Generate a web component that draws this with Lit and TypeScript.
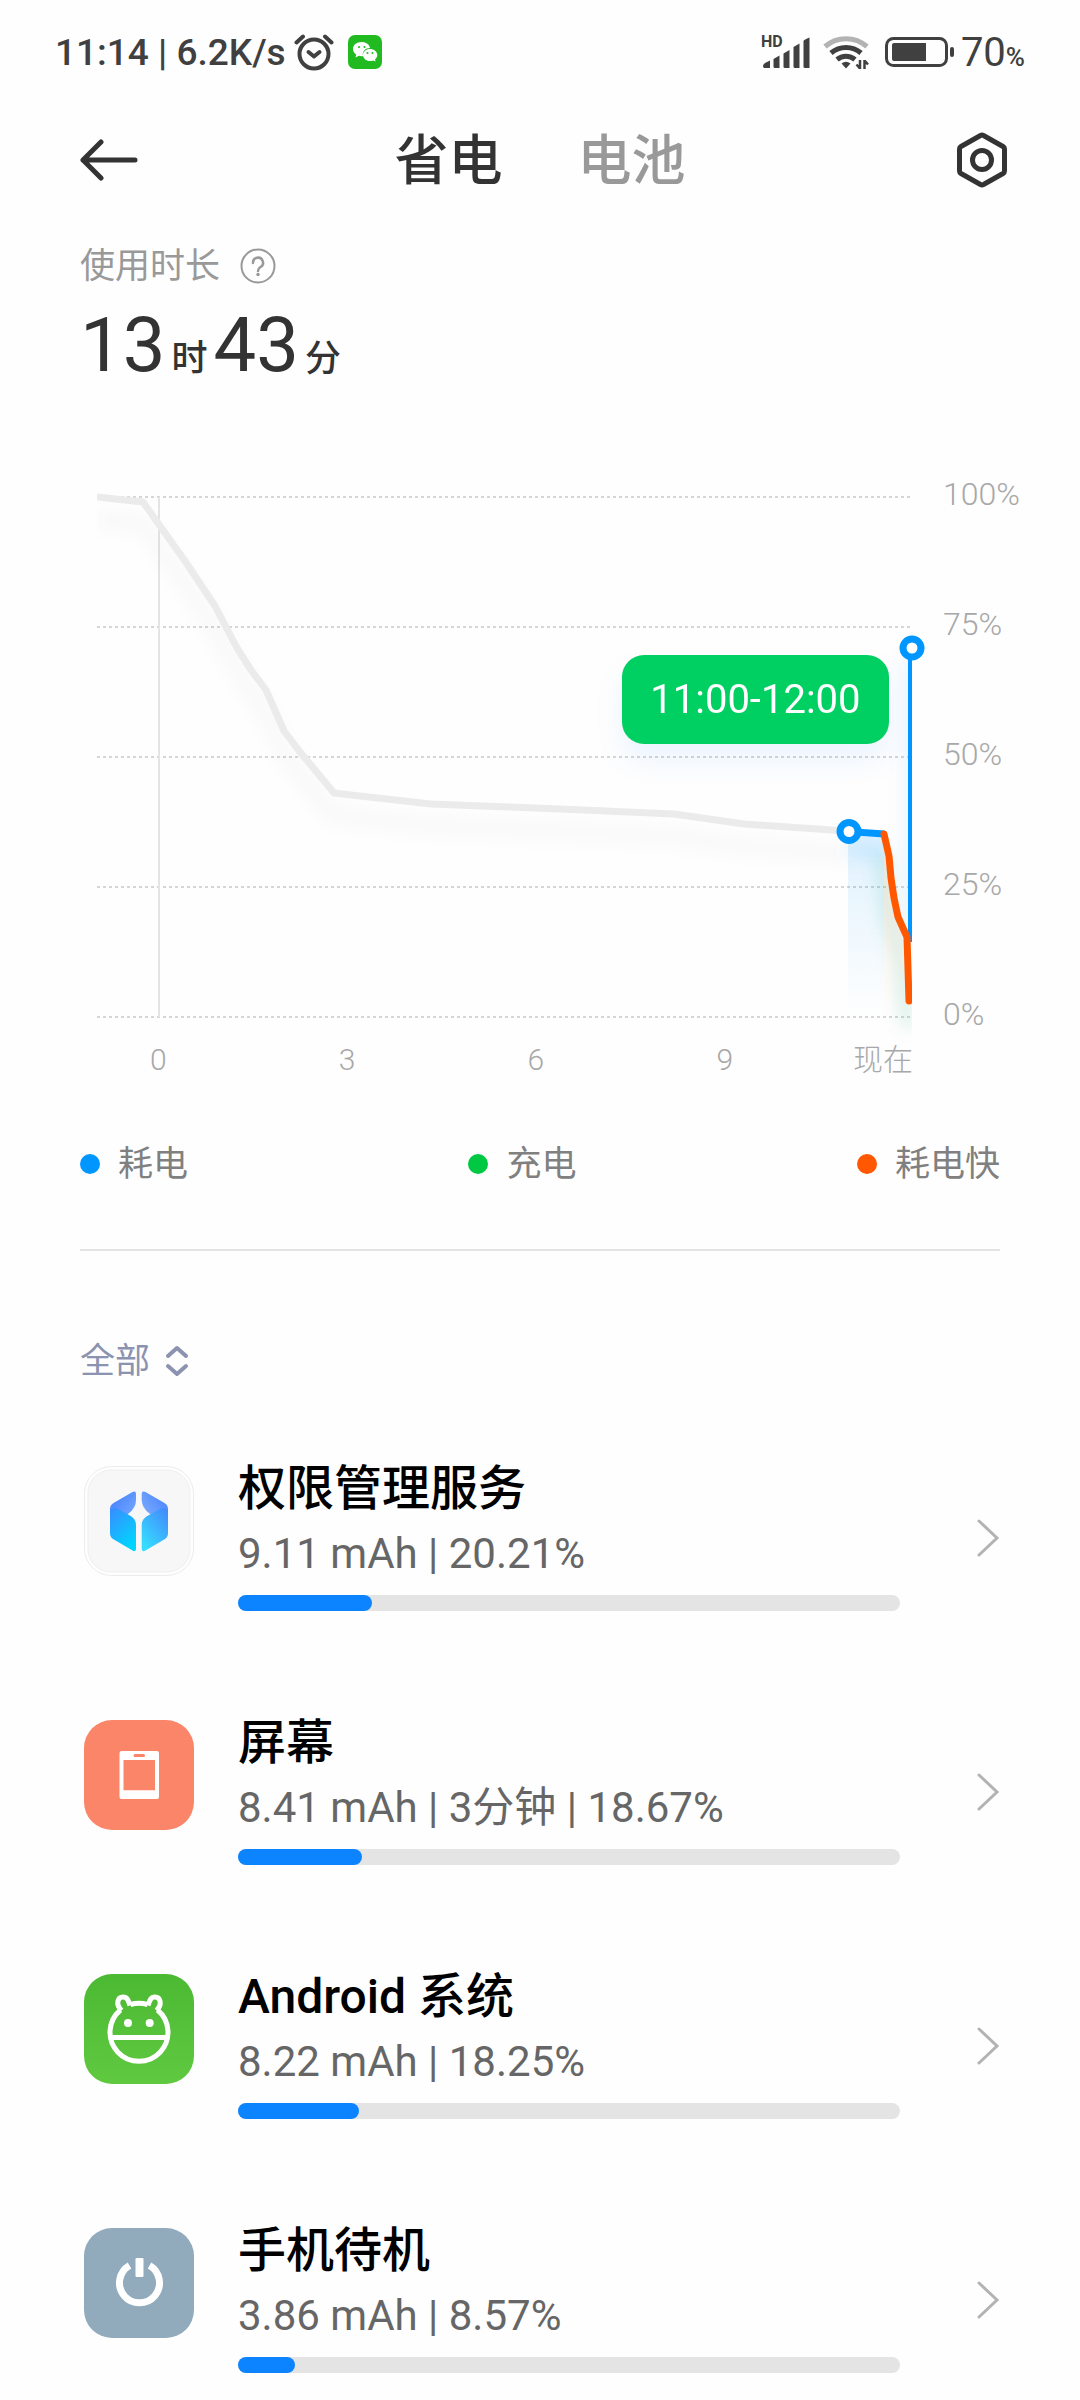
import { LitElement, html, css, svg } from "lit";
import { customElement, property } from "lit/decorators.js";

type IconName = "permission" | "screen" | "android" | "standby";

interface Consumer {
  icon: IconName;
  name: string;
  detail: string;
  percent: number;
}

const CONSUMERS: Consumer[] = [
  { icon: "permission", name: "权限管理服务", detail: "9.11 mAh | 20.21%", percent: 20.21 },
  { icon: "screen", name: "屏幕", detail: "8.41 mAh | 3分钟 | 18.67%", percent: 18.67 },
  { icon: "android", name: "Android 系统", detail: "8.22 mAh | 18.25%", percent: 18.25 },
  { icon: "standby", name: "手机待机", detail: "3.86 mAh | 8.57%", percent: 8.57 },
];

const ICONS = {
  permission: svg`
    <defs>
      <linearGradient id="top" x1="0" y1="0" x2="1" y2="1">
        <stop offset="0" stop-color="#3f7dfc" /><stop offset="1" stop-color="#7fb0ff" />
      </linearGradient>
      <linearGradient id="topR" x1="1" y1="0" x2="0" y2="1">
        <stop offset="0" stop-color="#4280fc" /><stop offset="1" stop-color="#8bb6ff" />
      </linearGradient>
      <linearGradient id="low" x1="0" y1="0" x2="0.6" y2="1">
        <stop offset="0" stop-color="#3a8bff" /><stop offset="1" stop-color="#00d5ff" />
      </linearGradient>
      <linearGradient id="lowR" x1="1" y1="0" x2="0.3" y2="1">
        <stop offset="0" stop-color="#4486fc" /><stop offset="1" stop-color="#35dcff" />
      </linearGradient>
    </defs>
    <rect x="0.5" y="0.5" width="109" height="109" rx="27" fill="#fefefe" stroke="#ececec" />
    <rect x="4" y="4" width="102" height="102" rx="23" fill="#f7f7f8" stroke="#efefef" />
    <path d="M26 60V43Q26 39 29.500 37L48.500 26Q52 24.500 52 28V34Q52 42 44.500 47.500L43 49L50 60Z" fill="url(#top)" />
    <path d="M84 60V43Q84 39 80.500 37L61.500 26Q57.700 24.500 57.700 28V34Q58 42 65.500 47.500L67 49L60 60Z" fill="url(#topR)" />
    <path d="M26 44Q31 40 36 44L44 48.500Q52 52 52 59V82.500Q52 86.500 48.500 84.500L29 73Q26 71 26 67Z" fill="url(#low)" />
    <path d="M84 44Q79 40 74 44L66 48.500Q57.700 52 57.700 59V82.500Q57.700 86.500 61.500 84.500L81 73Q84 71 84 67Z" fill="url(#lowR)" />`,
  screen: svg`
    <rect width="110" height="110" rx="28" fill="#fa8568" />
    <path fill-rule="evenodd" fill="#fff" d="M37.500 31H73Q75 31 75 33V77Q75 79 73 79H37.500Q35.500 79 35.500 77V33Q35.500 31 37.500 31ZM39.500 40V70.300H71V40ZM51 34Q49.500 34 49.500 35.500T51 37H59.500Q61 37 61 35.500T59.500 34Z" />`,
  android: svg`
    <defs>
      <linearGradient id="green" x1="0" y1="0" x2="0" y2="1">
        <stop offset="0" stop-color="#4cb933" /><stop offset="1" stop-color="#5fc940" />
      </linearGradient>
    </defs>
    <rect width="110" height="110" rx="28" fill="url(#green)" />
    <g fill="none" stroke="#fff" stroke-width="5" stroke-linejoin="round">
      <path d="M46.500 30.500A29 29 0 0 1 63.500 30.500" />
      <path d="M36.500 36A29 29 0 1 0 73.500 36" />
      <path d="M37.500 36.500C31 30 34 23 39 23C43.500 23 44.500 27 46 31.500" />
      <path d="M72.500 36.500C79 30 76 23 71 23C66.500 23 65.500 27 64 31.500" />
      <path d="M27 63.500H83" />
    </g>
    <circle cx="44" cy="49" r="4" fill="#fff" /><circle cx="65.700" cy="49" r="4" fill="#fff" />`,
  standby: svg`
    <rect width="110" height="110" rx="28" fill="#91abbd" />
    <path d="M45.500 37.500A20 20 0 1 0 65.500 37.500" fill="none" stroke="#fff" stroke-width="7" />
    <rect x="51.500" y="30" width="8" height="19" rx="1" fill="#fff" />`,
};

@customElement("usage-row")
export class UsageRow extends LitElement {
  @property({ attribute: false }) item!: Consumer;

  static styles = css`
    :host { display: block; }
    .row {
      display: flex;
      align-items: center;
      color: inherit;
      text-decoration: none;
    }
    .icon { flex: none; width: 110px; height: 110px; align-self: flex-start; margin: 9px 44px 0 4px; }
    .body { flex: 1; min-width: 0; padding-top: 2px; }
    .name { font-size: 48px; line-height: 60px; font-weight: 500; color: #000; }
    .detail { font-size: 42px; line-height: 52px; padding: 9px 0 15px; color: #666; }
    .track { height: 16px; border-radius: 8px; background: #e4e4e4; }
    .fill { height: 16px; border-radius: 8px; background: #0d84ff; }
    .chevron { flex: none; width: 24px; height: 40px; margin: 8px 0 0 76px; }
  `;

  render() {
    const { icon, name, detail, percent } = this.item;
    return html`
      <a class="row" href="#">
        <svg class="icon" viewBox="0 0 110 110" aria-hidden="true">${ICONS[icon]}</svg>
        <div class="body">
          <div class="name">${name}</div>
          <div class="detail">${detail}</div>
          <div class="track"><div class="fill" style="width:${percent}%"></div></div>
        </div>
        <svg class="chevron" viewBox="0 0 24 40" aria-hidden="true">
          <path d="M3 3L21 20L3 37" fill="none" stroke="#b3b3b3" stroke-width="3" stroke-linecap="round" />
        </svg>
      </a>
    `;
  }
}

@customElement("battery-chart")
export class BatteryChart extends LitElement {
  static styles = css`
    :host { display: block; }
    .plot { display: grid; grid-template-columns: minmax(0, 1fr) 137px; column-gap: 30px; margin-left: 97px; }
    .canvas { position: relative; }
    .lines { display: block; width: 100%; height: auto; overflow: visible; }
    .scale {
      display: flex;
      flex-direction: column;
      justify-content: space-between;
      margin: -23px 0 -17px;
      font-size: 32px;
      line-height: 40px;
      color: #a8a8a8;
      font-weight: 300;
    }
    .tip {
      position: absolute;
      right: 3%;
      top: 30.4%;
      padding: 0 28px;
      border-radius: 22px;
      background: #00d062;
      color: #fff;
      font-size: 40px;
      line-height: 89px;
      box-shadow: 0 16px 30px rgba(0, 130, 255, 0.08);
    }
    .hours {
      display: grid;
      grid-template-columns: repeat(4, 189fr) 94fr;
      margin: 23px 167px 0 64px;
      font-size: 30px;
      line-height: 40px;
      color: #a8a8a8;
      text-align: center;
      font-weight: 300;
      white-space: nowrap;
    }
    .now { display: flex; justify-content: flex-end; }
  `;

  render() {
    const rows = [0, 130, 260, 390, 520];
    const past = "0,0 46,5 88,64 118,109 140,151 154,173 169,193 187,234 203,255 237,296 334,307 463,312 577,317 647,327 750,334";
    const fast = "787,337 792,359 794,381 797,401 801,420 810,440 812,504";
    return html`
      <div class="plot">
        <div class="canvas">
          <svg class="lines" viewBox="0 0 816 520" role="img" aria-label="电量">
            <defs>
              <clipPath id="area"><rect x="0" y="-30" width="815" height="580" /></clipPath>
              <filter id="soft" x="-10%" y="-10%" width="120%" height="130%"><feGaussianBlur stdDeviation="8" /></filter>
              <linearGradient id="drain" x1="0" y1="0" x2="0" y2="1">
                <stop offset="0" stop-color="#0096ff" stop-opacity="0.12" />
                <stop offset="1" stop-color="#0096ff" stop-opacity="0" />
              </linearGradient>
              <linearGradient id="rapid" x1="0" y1="0" x2="0" y2="1">
                <stop offset="0" stop-color="#ff5a00" stop-opacity="0.1" />
                <stop offset="1" stop-color="#ff5a00" stop-opacity="0" />
              </linearGradient>
            </defs>
            ${rows.map((y) => svg`<path d="M0 ${y}H816" stroke="#d6d6d6" stroke-width="2" stroke-dasharray="3 3" />`)}
            <path d="M62 0V520" stroke="#e4e4e4" stroke-width="2" />
            <g clip-path="url(#area)" fill="none">
              <g filter="url(#soft)">
                <polyline points=${past} transform="translate(0 22)" stroke="#000" stroke-opacity="0.018" stroke-width="20" />
                <path d="M751 352L787 355" stroke="#0096ff" stroke-opacity="0.1" stroke-width="18" />
                <path d="M785 355L791 420L803 460L811 530" stroke="#00a070" stroke-opacity="0.16" stroke-width="12" />
                <path d="M813 160V440" stroke="#0096ff" stroke-opacity="0.12" stroke-width="10" />
              </g>
              <path d="M751 335L787 337V520H751Z" fill="url(#drain)" />
              <path d="M787 337L797 401L812 440V520H787Z" fill="url(#rapid)" />
              <polyline points=${past} stroke="#ebebeb" stroke-width="7" stroke-linejoin="round" />
              <path d="M751 334.500L787 337" stroke="#0096ff" stroke-width="7" />
              <path d="M813 150V445" stroke="#0096ff" stroke-width="4" />
              <polyline points=${fast} stroke="#ff5800" stroke-width="7" stroke-linejoin="round" stroke-linecap="round" />
            </g>
            <circle cx="752" cy="334.500" r="9" fill="#fff" stroke="#0096ff" stroke-width="7" />
            <circle cx="815" cy="151" r="9" fill="#fff" stroke="#0096ff" stroke-width="7" />
          </svg>
          <div class="tip">11:00-12:00</div>
        </div>
        <div class="scale">
          <span>100%</span><span>75%</span><span>50%</span><span>25%</span><span>0%</span>
        </div>
      </div>
      <div class="hours">
        <span>0</span><span>3</span><span>6</span><span>9</span><span class="now">现在</span>
      </div>
    `;
  }
}

@customElement("app-root")
export class AppRoot extends LitElement {
  static styles = css`
    :host {
      display: block;
      min-height: 100vh;
      background: #fefefe;
      color: #333;
      font-family: Roboto, "Noto Sans CJK SC", sans-serif;
    }
    button, select {
      font: inherit;
      color: inherit;
      background: none;
      border: 0;
      padding: 0;
      margin: 0;
      appearance: none;
    }
    button svg, .status svg, .filter svg { display: block; flex: none; }

    .status {
      display: flex;
      align-items: center;
      height: 104px;
      padding: 0 55px;
      color: #404040;
      font-size: 37px;
      font-weight: 500;
    }
    .alarm { margin: 0 14px 0 8px; }
    .right { display: flex; align-items: center; margin-left: auto; }
    .signal { display: grid; margin-right: 12px; }
    .signal svg, .hd { grid-area: 1 / 1; }
    .hd { align-self: start; font-size: 16px; line-height: 14px; font-weight: 700; }
    .wifi { margin-right: 14px; }
    .level { font-weight: 400; font-size: 40px; margin-left: 6px; }
    .unit { font-size: 26px; font-weight: 500; }

    .bar {
      display: flex;
      align-items: center;
      justify-content: space-between;
      height: 112px;
      padding: 0 72px 0 80px;
    }
    .tabs {
      display: flex;
      gap: 75px;
      margin-right: 14px;
      padding-top: 4px;
      font-size: 54px;
      line-height: 72px;
      font-weight: 500;
    }
    .tab { color: #999; }
    .tab.on { color: #333; }

    .caption {
      display: flex;
      align-items: center;
      gap: 20px;
      margin: 24px 80px 14px;
      font-size: 35px;
      line-height: 48px;
      color: #999;
    }
    .label, .filter select { padding-top: 3px; }
    .duration {
      display: flex;
      align-items: baseline;
      gap: 6px;
      height: 80px;
      margin: 0 80px 112px;
      font-size: 36px;
      line-height: 80px;
      font-weight: 500;
    }
    .number { font-size: 76px; font-weight: 400; }

    .legend {
      display: flex;
      justify-content: space-between;
      margin: 58px 80px 0;
      padding-bottom: 60px;
      border-bottom: 2px solid #e4e4e4;
      font-size: 35px;
      line-height: 48px;
      color: #808080;
    }
    .entry { display: flex; align-items: center; gap: 18px; }
    .dot { width: 20px; height: 20px; border-radius: 50%; }
    .drain { background: #0096ff; }
    .charge { background: #00c843; }
    .rapid { background: #ff5800; }

    .filter {
      display: flex;
      align-items: center;
      gap: 14px;
      width: max-content;
      margin: 84px 80px 71px;
      font-size: 35px;
      line-height: 48px;
      color: #8c93b0;
    }
    .list { display: grid; gap: 100px; margin: 0 80px; padding: 0; list-style: none; }
  `;

  render() {
    return html`
      <div class="status">
        <span>11:14 | 6.2K/s</span>
        <svg class="alarm" width="40" height="38" viewBox="0 0 40 38" fill="none" stroke="#404040" stroke-linecap="round" aria-hidden="true">
          <circle cx="20" cy="21" r="14.500" stroke-width="4" />
          <path d="M14.500 19L20 23.500L25.500 19" stroke-width="4" stroke-linejoin="round" />
          <path d="M2.500 9.500L9 3.500M37.500 9.500L31 3.500" stroke-width="4" />
        </svg>
        <svg width="34" height="34" viewBox="0 0 34 34" aria-hidden="true">
          <rect width="34" height="34" rx="7" fill="#22ba21" />
          <path d="M13.500 7C8.500 7 5 10.200 5 14C5 16.300 6.200 18.200 8.200 19.500L7.500 22.500L11 20.800C12.500 21.200 14 21.300 15 21C14 16.500 17.500 13 22 13C21.500 9.500 18 7 13.500 7Z" fill="#fff" />
          <path d="M22 14C18 14 15 16.700 15 20C15 23.300 18 26 22 26C23.200 26 24.300 25.700 25.200 25.400L27.500 26.500L27 24.300C28.500 23.200 29.300 21.700 29.300 20C29.300 16.700 26 14 22 14Z" fill="#fff" />
          <circle cx="11" cy="12" r="1.100" fill="#22ba21" /><circle cx="16.500" cy="12" r="1.100" fill="#22ba21" />
          <circle cx="19.500" cy="18" r="1" fill="#22ba21" /><circle cx="24.500" cy="18" r="1" fill="#22ba21" />
        </svg>
        <div class="right">
          <div class="signal">
            <svg width="50" height="34" viewBox="0 0 50 34" fill="#404040" aria-hidden="true">
              <path d="M2 31Q2 29.500 4 28L9 25.500V33H3.500Q2 33 2 31Z" />
              <path d="M12.500 24L18.500 20.500V33H14Q12.500 33 12.500 31.500Z" />
              <path d="M22.500 18.500L28.500 15V33H24Q22.500 33 22.500 31.500Z" />
              <path d="M32.500 12L38.500 8.500V33H34Q32.500 33 32.500 31.500Z" />
              <path d="M42.500 6Q43 4.500 48.500 2.500V33H44Q42.500 33 42.500 31.500Z" />
            </svg>
            <span class="hd">HD</span>
          </div>
          <svg class="wifi" width="48" height="36" viewBox="0 0 48 36" fill="none" stroke="#404040" aria-hidden="true">
            <path d="M2 12.500A32 32 0 0 1 44 12.500" stroke="#b3b3b3" stroke-width="5" />
            <path d="M8 19A23 23 0 0 1 38 19" stroke-width="5" />
            <path d="M14 25.500A14 14 0 0 1 32 25.500" stroke-width="5" />
            <path d="M18.500 29.500Q23 26 27.500 29.500L23 34.500Z" fill="#404040" stroke="none" />
            <path d="M37 26V35M33.500 30.500L37 34.500M41.500 35V26M41.500 26.500L45 30.500" stroke-width="2.500" />
          </svg>
          <svg width="70" height="32" viewBox="0 0 70 32" aria-hidden="true">
            <rect x="1.500" y="2.500" width="60" height="27" rx="7" fill="none" stroke="#404040" stroke-width="3" />
            <path d="M9 7H41V25H9Q7 25 7 23V9Q7 7 9 7Z" fill="#404040" />
            <rect x="65" y="11" width="4" height="10" rx="2" fill="#404040" />
          </svg>
          <span class="level">70<span class="unit">%</span></span>
        </div>
      </div>

      <header class="bar">
        <button aria-label="返回">
          <svg width="58" height="42" viewBox="0 0 58 42" fill="none" stroke="#333" stroke-width="5" stroke-linecap="round" stroke-linejoin="round">
            <path d="M55 21H3M21 3L3 21L21 39" />
          </svg>
        </button>
        <div class="tabs" role="tablist">
          <button class="tab on" role="tab" aria-selected="true">省电</button>
          <button class="tab" role="tab" aria-selected="false">电池</button>
        </div>
        <button aria-label="设置">
          <svg width="52" height="56" viewBox="0 0 52 56" fill="none" stroke="#333" stroke-width="5" stroke-linejoin="round">
            <path d="M24.500 3.500Q26 2.700 27.500 3.500L47 14.500Q48.500 15.400 48.500 17V39Q48.500 40.600 47 41.500L27.500 52.500Q26 53.300 24.500 52.500L5 41.500Q3.500 40.600 3.500 39V17Q3.500 15.400 5 14.500Z" />
            <circle cx="26" cy="28" r="9.500" />
          </svg>
        </button>
      </header>

      <div class="caption">
        <span class="label">使用时长</span>
        <button aria-label="帮助">
          <svg width="36" height="36" viewBox="0 0 36 36" fill="none" stroke="#999" stroke-width="2">
            <circle cx="18" cy="18" r="16.500" />
            <path d="M13 15A5 5 0 1 1 20.500 19C18.500 20.300 18 20.800 18 23" stroke-width="2.500" stroke-linecap="round" />
            <circle cx="18" cy="26.500" r="1.700" fill="#999" stroke="none" />
          </svg>
        </button>
      </div>
      <div class="duration">
        <span class="number">13</span><span>时</span><span class="number">43</span><span>分</span>
      </div>

      <battery-chart></battery-chart>

      <div class="legend">
        <span class="entry"><i class="dot drain"></i><span class="label">耗电</span></span>
        <span class="entry"><i class="dot charge"></i><span class="label">充电</span></span>
        <span class="entry"><i class="dot rapid"></i><span class="label">耗电快</span></span>
      </div>

      <label class="filter">
        <select aria-label="筛选"><option>全部</option></select>
        <svg width="24" height="32" viewBox="0 0 24 32" fill="none" stroke="#8c93b0" stroke-width="4" stroke-linecap="round" stroke-linejoin="round" aria-hidden="true">
          <path d="M3 11L12 3L21 11M3 21L12 29L21 21" />
        </svg>
      </label>

      <ul class="list">
        ${CONSUMERS.map((item) => html`<li><usage-row .item=${item}></usage-row></li>`)}
      </ul>
    `;
  }
}
